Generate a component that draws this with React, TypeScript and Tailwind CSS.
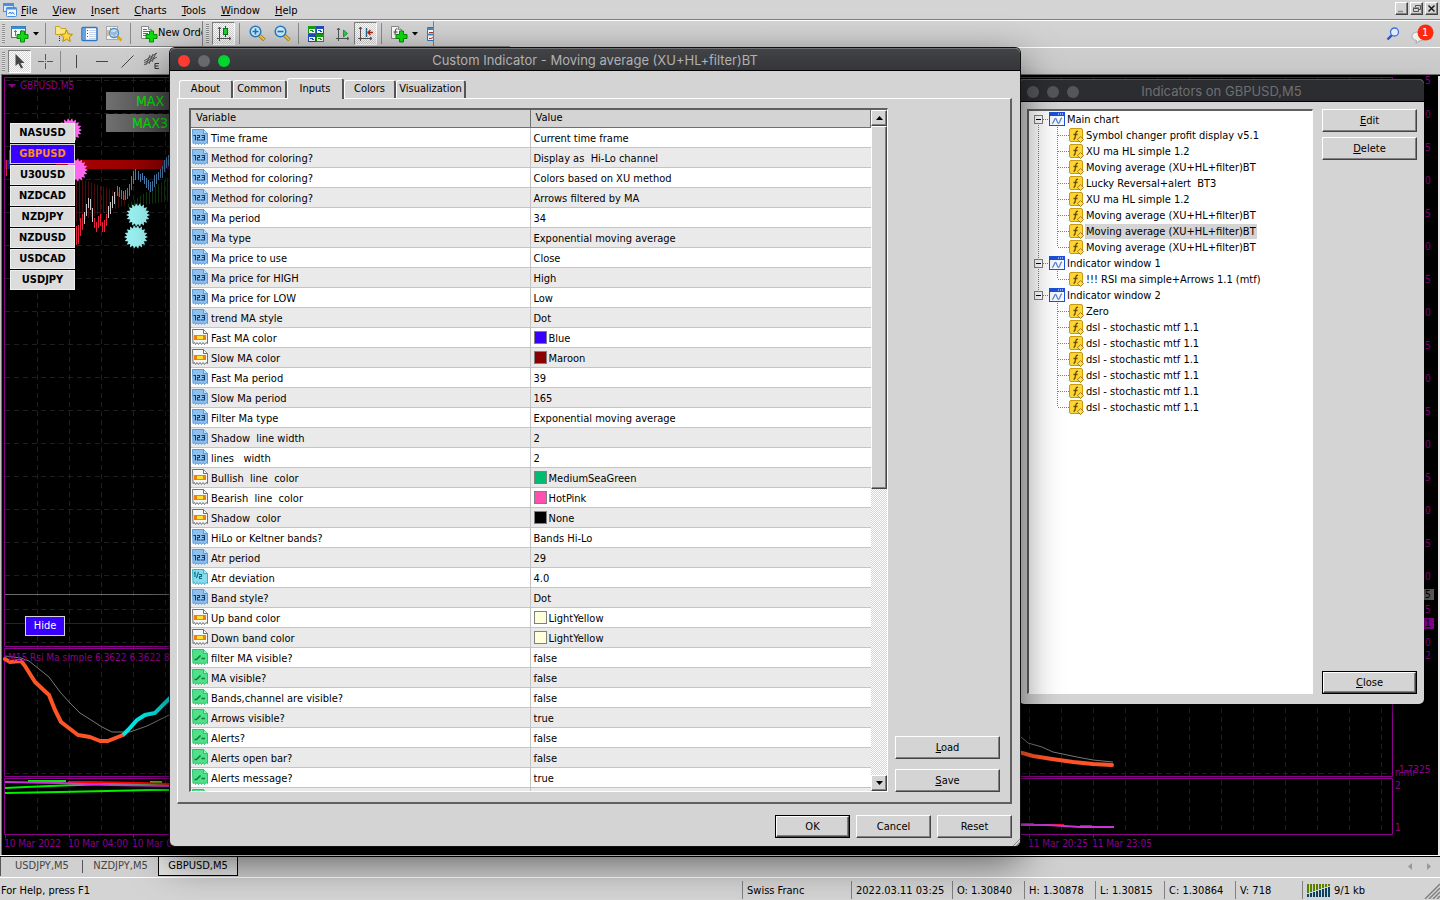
import React from "react";

const TAHOMA = "font-['DejaVu_Sans_Condensed','Liberation_Sans',sans-serif] text-[11px]";
const RAISED =
  "border border-t-white border-l-white border-r-[#444] border-b-[#444] bg-[#d4d4d4] shadow-[inset_-1px_-1px_0_#808080]";
const PRESSED =
  "border border-t-[#808080] border-l-[#808080] border-r-white border-b-white bg-[repeating-conic-gradient(#ffffff_0_25%,#d4d4d4_0_50%)] bg-[length:2px_2px]";
const CHECKER = "bg-[repeating-conic-gradient(#ffffff_0_25%,#d4d4d4_0_50%)] bg-[length:2px_2px]";

/* ---------- icons ---------- */

function AppIcon() {
  return (
    <svg width="16" height="16" viewBox="0 0 16 16" aria-hidden="true">
      <rect x="1.5" y="1.5" width="10" height="8" fill="#dcebfb" stroke="#4a8ee0" />
      <path d="M1.5 3h10" stroke="#4a8ee0" strokeWidth="2" />
      <rect x="4.5" y="5.5" width="10" height="9" rx="1" fill="#f4f9ff" stroke="#4a8ee0" />
      <path d="M4.5 6.5h10" stroke="#4a8ee0" strokeWidth="2" />
      <path d="M6.5 12l1.500-2 1.500 2 1-2 2 2.500" fill="none" stroke="#3a7bd0" />
    </svg>
  );
}

function Plus({ x, y }: { x: number; y: number }) {
  return (
    <path
      transform={`translate(${x} ${y})`}
      d="M4 .5h4V4h3.500v4H8v3.500H4V8H.5V4H4z"
      fill="#0fdc0f"
      stroke="#0a8a0a"
    />
  );
}

function NewChartIcon() {
  return (
    <svg width="18" height="18" viewBox="0 0 18 18" aria-hidden="true">
      <rect x=".5" y="1.500" width="14" height="11" fill="#f3f8fd" stroke="#2f7fc0" />
      <path d="M1 3h13" stroke="#3b8fd0" strokeWidth="2" />
      <path d="M4.500 5v6M3 6.500h3M10.500 5v3" stroke="#5a7fa0" />
      <Plus x={5.5} y={5.5} />
    </svg>
  );
}

function FavoritesIcon() {
  return (
    <svg width="19" height="18" viewBox="0 0 19 18" aria-hidden="true">
      <path d="M1.500 1.500h4l1.500 2h5v6H1.500z" fill="#f9e48a" stroke="#c9a21a" />
      <path d="M5.500 11v5" stroke="#333" strokeDasharray="1 1" />
      <path d="M12.500 5l1.800 4 4.200.4-3.200 2.900 1 4.200-3.800-2.300-3.700 2.300 1-4.200-3.200-2.900 4.200-.4z" fill="#ffd93a" stroke="#b78a10" />
    </svg>
  );
}

function NavigatorIcon() {
  return (
    <svg width="17" height="16" viewBox="0 0 17 16" aria-hidden="true">
      <rect x="1" y="1.500" width="15" height="13" rx="1" fill="#fff" stroke="#2a76c8" strokeWidth="1.500" />
      <rect x="2" y="2" width="3" height="12" fill="#5aa4ea" />
      <path d="M6 4.500h1M6 7.500h1M6 10.500h1" stroke="#d02020" />
      <path d="M8 4.500h7M8 6.500h7M8 8.500h7M8 10.500h7M8 12.500h7" stroke="#c5d6ea" />
    </svg>
  );
}

function TesterIcon() {
  return (
    <svg width="18" height="18" viewBox="0 0 18 18" aria-hidden="true">
      <rect x="1.500" y="1.500" width="11" height="13" fill="#f2f2f2" stroke="#a8a8a8" />
      <path d="M3 11V5M5.500 9V3M10 12V7" stroke="#a09060" />
      <circle cx="9" cy="8" r="4.500" fill="#bfe0fa" fillOpacity=".8" stroke="#4c8cc8" strokeWidth="1.300" />
      <path d="M12.500 11.500l4 4" stroke="#d6a520" strokeWidth="2.600" />
      <path d="M7 10V6.500M9 11V7M11 9.500V6" stroke="#6f93b8" />
    </svg>
  );
}

function DocPlusIcon({ fx }: { fx?: boolean }) {
  return (
    <svg width="18" height="18" viewBox="0 0 18 18" aria-hidden="true">
      <path d="M1.500 1.500h7l3 3v9h-10z" fill="#fbfbfb" stroke="#888" />
      <path d="M8.500 1.500v3h3" fill="#ddd" stroke="#888" />
      {fx ? (
        <path d="M7.500 4C6 3.500 5.500 4 5.300 6L5 10M3.500 7h4" fill="none" stroke="#444" />
      ) : (
        <path d="M3 4.500h4M3 6.500h6M3 8.500h5M3 10.500h3" stroke="#667" />
      )}
      <Plus x={5.5} y={5.5} />
    </svg>
  );
}

function CandleIcon() {
  return (
    <svg width="16" height="16" viewBox="0 0 16 16" aria-hidden="true">
      <path d="M3.500 1v14M1 12.500h14M2 3l1.500-2L5 3M13 11l2 1.500-2 1.500" fill="none" stroke="#555" />
      <path d="M9.500 0v11" stroke="#0a7a0a" />
      <rect x="7.500" y="2.500" width="4" height="6" fill="#12d83a" stroke="#0a7a0a" />
    </svg>
  );
}

function ZoomIcon({ plus }: { plus?: boolean }) {
  return (
    <svg width="17" height="17" viewBox="0 0 17 17" aria-hidden="true">
      <path d="M10.500 10.500l5 4.500" stroke="#a87c10" strokeWidth="3.600" />
      <path d="M10.500 10.500l4.800 4.300" stroke="#f3cf3c" strokeWidth="2" />
      <circle cx="6.500" cy="6.500" r="5.300" fill="#c9ecfd" stroke="#2a7cc4" strokeWidth="1.500" />
      <path d={plus ? "M3.500 6.500h6M6.500 3.500v6" : "M3.500 6.500h6"} stroke="#2a6fb0" strokeWidth="1.600" />
    </svg>
  );
}

function TileIcon() {
  const tile = (x: number, y: number, c: string, l: string) => (
    <g key={`${x}-${y}`}>
      <rect x={x} y={y} width="8" height="8" fill={c} />
      <rect x={x + 1} y={y + 3} width="6" height="4" fill="#fff" />
      <path d={`M${x + 2} ${y + 4.5}h3M${x + 4} ${y + 5.5}h2`} stroke={l} />
    </g>
  );
  return (
    <svg width="16" height="16" viewBox="0 0 16 16" aria-hidden="true">
      {tile(0, 0, "#14a012", "#14a012")}
      {tile(8, 0, "#1d4fc0", "#1d4fc0")}
      {tile(0, 8, "#1d4fc0", "#1d4fc0")}
      {tile(8, 8, "#14a012", "#14a012")}
    </svg>
  );
}

function AutoScrollIcon() {
  return (
    <svg width="16" height="16" viewBox="0 0 16 16" aria-hidden="true">
      <path d="M3.500 2v13M1 12.500h13M2 4l1.500-2L5 4M12 11l2 1.500-2 1.500" fill="none" stroke="#555" />
      <path d="M8.500 4v7l4-3.500z" fill="#2ad04a" stroke="#0a8a2a" strokeWidth=".8" />
    </svg>
  );
}

function ChartShiftIcon() {
  return (
    <svg width="17" height="16" viewBox="0 0 17 16" aria-hidden="true">
      <path d="M3.500 1v14M1 12.500h14M2 3l1.500-2L5 3M13 11l2 1.500-2 1.500" fill="none" stroke="#555" />
      <path d="M9.500 2v9" stroke="#1d6a90" strokeWidth="1.400" />
      <path d="M11 6.500h5M13.500 4L11 6.500 13.500 9" fill="none" stroke="#b02010" strokeWidth="1.300" />
    </svg>
  );
}

function PeriodIcon() {
  return (
    <svg width="7" height="16" viewBox="0 0 7 16" aria-hidden="true">
      <path d="M7 1.500H1.500v13H7" fill="#fff" stroke="#2a76c8" />
      <path d="M1 3h6M1 8.500h6" stroke="#3b8fd0" strokeWidth="2" />
      <path d="M3 6.500h4M3 12.500h2l2-1" stroke="#c03020" fill="none" />
    </svg>
  );
}

function Caret() {
  return (
    <svg width="6" height="4" viewBox="0 0 6 4" aria-hidden="true">
      <path d="M0 0h6L3 3.500z" fill="#000" />
    </svg>
  );
}

type Kind = "int" | "dbl" | "color" | "bool";
const SHEET = "M.5.5h11l4 4v10l-1.500-1-1.500 2-1.500-2-1.500 2-1.500-2-1.500 2-1.500-2-1.500 2-1-2-1.500 1z";

function KindIcon({ kind }: { kind: Kind }) {
  const fill = { int: "#8fc0ee", dbl: "#86dcec", color: "#f6f6f6", bool: "#4fe08a" }[kind];
  const stroke = { int: "#5a9ad8", dbl: "#3fb2ca", color: "#707070", bool: "#2cc068" }[kind];
  return (
    <svg width="16" height="16" viewBox="0 0 16 16" aria-hidden="true" className="shrink-0">
      <path d={SHEET} fill={fill} stroke={stroke} />
      <path d="M11.500.5v4h4" fill="#fff" fillOpacity=".5" stroke={stroke} />
      {kind === "int" && (
        <path
          d="M1.500 6.500H3.500V11.500M5 6.500h2.500v2H5.500v2.500H8.500M9.500 6.500h3v4.500h-3.500M10 8.500h2.500"
          fill="none"
          stroke="#0d3a70"
          strokeWidth="1.100"
        />
      )}
      {kind === "dbl" && (
        <path d="M2 4.500l1-1V8M6.500 3L4.500 9M7 5.500h2.500v2H7.500v2H10" fill="none" stroke="#0d6a80" strokeWidth="1.100" />
      )}
      {kind === "color" && (
        <>
          <rect x="2" y="6" width="12" height="5" fill="#f08010" />
          <rect x="5" y="7" width="6" height="3" fill="#ffe030" />
        </>
      )}
      {kind === "bool" && <path d="M2.500 10.500h2l4-4M9.500 9.500h3.500" fill="none" stroke="#0a7a3a" strokeWidth="1.600" />}
    </svg>
  );
}

function WindowIcon() {
  return (
    <svg width="16" height="14" viewBox="0 0 16 14" aria-hidden="true">
      <rect x=".5" y=".5" width="15" height="13" fill="#f6f9ff" stroke="#1c50d8" />
      <rect width="16" height="4" fill="#1c50d8" />
      <path d="M9 2h1M11 2h1M13 2h1" stroke="#fff" />
      <path d="M3 11.500c2 0 2-5 3.500-5s1.500 5 3 5S11 6 13 6" fill="none" stroke="#5a86d8" strokeWidth="1.300" />
    </svg>
  );
}

function FunctionIcon() {
  return (
    <svg width="15" height="15" viewBox="0 0 15 15" aria-hidden="true">
      <rect x=".5" y=".5" width="13" height="13" rx="1.500" fill="#fbd634" stroke="#c79a10" />
      <path d="M9 3.500C7.500 2.700 7 4 6.700 6L6 10c-.2 1-.8 1.300-1.600 1M4.500 6.500h4" fill="none" stroke="#6a4a00" strokeWidth="1.300" />
      <path d="M11.500 8.500l3 3-3 3-3-3z" fill="#ffdf50" stroke="#a87c10" />
    </svg>
  );
}

/* ---------- menu and toolbars ---------- */

const MENUS = ["File", "View", "Insert", "Charts", "Tools", "Window", "Help"];

function Accel({ text }: { text: string }) {
  return (
    <>
      <span className="underline underline-offset-1">{text[0]}</span>
      {text.slice(1)}
    </>
  );
}

function MenuBar() {
  const box = `flex h-[13px] w-[13px] items-center justify-center ${RAISED}`;
  return (
    <header className="flex h-5 items-center border-b border-[#808080] px-[2px]">
      <AppIcon />
      <nav className="ml-[3px] flex flex-1 gap-[15px] pt-1">
        {MENUS.map((m) => (
          <button key={m} type="button">
            <Accel text={m} />
          </button>
        ))}
      </nav>
      <div className="flex gap-[2px] pb-[3px]">
        <button type="button" aria-label="Minimize" className={box}>
          <svg width="9" height="9"><path d="M1 7.500h5" stroke="#888" strokeWidth="1.500" /></svg>
        </button>
        <button type="button" aria-label="Restore" className={box}>
          <svg width="9" height="9"><path d="M3.500 3V1.500h5v4H7M1.500 4.500h5v3h-5zM1 4h6" fill="none" stroke="#555" /></svg>
        </button>
        <button type="button" aria-label="Close window" className={box}>
          <svg width="9" height="9"><path d="M1.500 1.500l6 6M7.500 1.500l-6 6" stroke="#111" strokeWidth="1.400" /></svg>
        </button>
      </div>
    </header>
  );
}

function Grip() {
  return <span className="h-[19px] w-[3px] shrink-0 bg-[repeating-linear-gradient(#8a8a8a_0_1px,#e4e4e4_1px_2px)]" />;
}

function Sep() {
  return <span className="h-[21px] w-px shrink-0 bg-[#8a8a8a]" />;
}

function Tool({ label, w, on, children }: { label: string; w: string; on?: boolean; children: React.ReactNode }) {
  return (
    <button type="button" aria-label={label} className={`flex h-[23px] shrink-0 items-center justify-center gap-1 ${w} ${on ? PRESSED : ""}`}>
      {children}
    </button>
  );
}

function Toolbars() {
  return (
    <div className="relative border-t border-white bg-linear-to-b from-[#d4d4d4] to-[#c8c8c8]">
      <div className="flex h-[26px] items-center">
        <div className="flex h-full w-[203px] items-center overflow-hidden border-b border-r border-[#808080] pl-[2px]">
          <Grip />
          <Tool label="New chart" w="w-[40px]"><NewChartIcon /><Caret /></Tool>
          <Sep />
          <Tool label="Favorites" w="w-[34px]"><FavoritesIcon /></Tool>
          <Tool label="Navigator" w="w-[18px]"><NavigatorIcon /></Tool>
          <Tool label="Strategy tester" w="w-[32px]"><TesterIcon /></Tool>
          <Sep />
          <button type="button" className="flex shrink-0 items-center whitespace-nowrap pl-[9px]">
            <DocPlusIcon />
            New Order
          </button>
        </div>
        <div className="flex h-full w-[231px] items-center overflow-hidden border-b border-r border-[#808080] pl-[3px]">
          <Grip />
          <span className="w-[3px] shrink-0" />
          <Tool label="Candlesticks" w="w-[23px]" on><CandleIcon /></Tool>
          <span className="w-1 shrink-0" />
          <Sep />
          <span className="w-1 shrink-0" />
          <Tool label="Zoom in" w="w-[26px]"><ZoomIcon plus /></Tool>
          <Tool label="Zoom out" w="w-[25px]"><ZoomIcon /></Tool>
          <span className="w-[3px] shrink-0" />
          <Sep />
          <Tool label="Tile windows" w="w-[33px]"><TileIcon /></Tool>
          <Tool label="Auto scroll" w="w-[22px]"><AutoScrollIcon /></Tool>
          <Tool label="Chart shift" w="w-[23px]" on><ChartShiftIcon /></Tool>
          <span className="w-1 shrink-0" />
          <Sep />
          <Tool label="Indicators" w="w-[44px]"><DocPlusIcon fx /><Caret /></Tool>
          <Tool label="Periods" w="w-[7px]"><PeriodIcon /></Tool>
        </div>
        <div className="flex h-full w-[76px] border-b border-[#808080]" />
        <div className="flex flex-1 items-center justify-end gap-[11px] pr-[6px]">
          <button type="button" aria-label="Search">
            <svg width="14" height="14" viewBox="0 0 14 14">
              <path d="M1.500 12.500L6 8" stroke="#2a52c8" strokeWidth="2.400" />
              <circle cx="8.500" cy="5" r="4" fill="#e2edff" stroke="#3f6fe0" strokeWidth="1.300" />
            </svg>
          </button>
          <button type="button" aria-label="Notifications" className="relative h-5 w-[23px]">
            <svg width="23" height="20" viewBox="0 0 23 20">
              <path d="M7 8c4 0 7 1.500 7 4.500S11 17 8 17l-3 2.500.5-3C2.500 16 1 14.500 1 12.500 1 9.500 3.500 8 7 8z" fill="#efefef" stroke="#a8a8a8" />
              <circle cx="14.500" cy="8.500" r="8" fill="#fb2a0e" />
            </svg>
            <span className="absolute left-[11px] top-[1px] text-white">1</span>
          </button>
        </div>
      </div>
      <div className="flex h-[27px] items-center border-t border-white pl-[2px]">
        <Grip />
        <span className="w-[3px] shrink-0" />
        <Tool label="Cursor" w="w-[23px]" on>
          <svg width="12" height="15" viewBox="0 0 12 15"><path d="M1.500 0v12l3-2.500 2.500 5 2-1-2.500-4.500h4z" fill="#444" /></svg>
        </Tool>
        <Tool label="Crosshair" w="w-[29px]">
          <svg width="15" height="15"><path d="M7.500 0v6M7.500 9v6M0 7.500h6M9 7.500h6M7 7.500h1" stroke="#555" /></svg>
        </Tool>
        <Sep />
        <Tool label="Vertical line" w="w-[31px]"><svg width="3" height="13"><path d="M1.500 0v13" stroke="#444" /></svg></Tool>
        <Tool label="Horizontal line" w="w-[20px]"><svg width="12" height="3"><path d="M0 1.500h12" stroke="#444" /></svg></Tool>
        <Tool label="Trend line" w="w-[30px]"><svg width="13" height="13"><path d="M.5 12.500l12-12" stroke="#444" /></svg></Tool>
        <Tool label="Equidistant channel" w="w-[20px]">
          <svg width="18" height="18" viewBox="0 0 18 18">
            <path d="M1 9L14 1M1 13L14 5M3 13L7 3M6 12l4-10M9 10l4-9M1 11l10-6" stroke="#555" />
            <path d="M16 11.500h-4v5h4M12 14h3.500" fill="none" stroke="#333" />
          </svg>
        </Tool>
      </div>
    </div>
  );
}

/* ---------- chart ---------- */

const GRID_X = Array.from({ length: 43 }, (_, i) => 37.5 + i * 32);
const GRID_Y = [80.5, 113.5, 146.5, 179.5, 212.5, 245.5, 278.5, 311.5, 344.5, 377.5, 410.5, 443.5, 476.5, 509.5, 542.5, 575.5, 609.5, 642.5, 773.5];
const AXIS: [number, string][] = [
  [84, "5"], [118, "0"], [151, "5"], [184, "0"], [217, "5"], [250, "0"], [283, "5"], [316, "0"], [349, "5"],
  [382, "0"], [415, "5"], [448, "0"], [481, "5"], [514, "0"], [547, "5"], [580, "0"], [613, "5"], [646, "0"], [659, "2"],
];
const PRICE: [number, number, number, string][] = [
  [76, 226, 245, "r"], [78, 225, 244, "r"], [80, 218, 236, "r"], [82, 214, 230, "r"], [84, 212, 224, "w"], [86, 204, 216, "w"],
  [88, 198, 208, "w"], [90, 199, 210, "w"], [92, 208, 222, "w"], [94, 218, 228, "r"], [96, 222, 232, "r"], [98, 216, 228, "r"],
  [100, 214, 226, "r"], [102, 222, 232, "r"], [104, 220, 232, "r"], [106, 214, 226, "r"], [108, 206, 218, "w"], [110, 202, 214, "w"],
  [112, 196, 208, "w"], [114, 192, 204, "w"], [117, 186, 196, "b"], [119, 187, 197, "b"], [121, 190, 199, "b"], [123, 191, 200, "b"],
  [125, 190, 200, "b"], [127, 188, 199, "b"], [129, 184, 196, "b"], [131, 176, 190, "b"], [133, 171, 184, "b"], [135, 169, 180, "b"],
  [138, 171, 180, "b"], [140, 174, 182, "b"], [142, 173, 180, "b"], [144, 176, 184, "b"], [146, 178, 188, "b"], [148, 180, 190, "b"],
  [150, 182, 192, "b"], [152, 181, 191, "b"], [154, 175, 187, "b"], [156, 174, 184, "b"], [158, 172, 180, "b"], [160, 169, 178, "b"],
  [162, 166, 178, "b"], [164, 160, 172, "b"], [166, 157, 168, "b"], [168, 155, 166, "b"], [170, 154, 164, "b"],
];
const PRICE_COLORS: Record<string, string> = { r: "#e8203c", w: "#c8c8c8", b: "#4a80b0" };

function burst(cx: number, cy: number, r: number) {
  const pts: string[] = [];
  for (let i = 0; i < 36; i++) {
    const a = (i * Math.PI) / 18;
    const q = i % 2 ? r - 3 : r;
    pts.push(`${(cx + q * Math.cos(a)).toFixed(1)},${(cy + q * Math.sin(a)).toFixed(1)}`);
  }
  return pts.join(" ");
}

function Chart() {
  return (
    <svg viewBox="0 74 1440 781" preserveAspectRatio="xMinYMin slice" className="absolute inset-0 h-full w-full" role="img" aria-label="GBPUSD,M5 chart">
      <defs>
        <linearGradient id="tag" x2="1"><stop offset="0" stopColor="#707070" /><stop offset="1" stopColor="#484848" /></linearGradient>
        <linearGradient id="band" x2="1"><stop offset="0" stopColor="#b00000" /><stop offset=".9" stopColor="#900000" /><stop offset="1" stopColor="#101060" /></linearGradient>
      </defs>
      <rect y="74" width="1440" height="781" fill="#000" />
      <path d="M0 74.500h1440M1.500 74v781" stroke="#707070" fill="none" />
      <path d="M.5 74v781" stroke="#c4c4c4" />
      <path d="M1439 76v779" stroke="#e8e8e8" strokeWidth="2" />
      <g stroke="#1f1f1f" strokeDasharray="5 4" fill="none">
        {GRID_X.map((x) => <path key={x} d={`M${x} 78V834`} />)}
        {GRID_Y.map((y) => <path key={y} d={`M5 ${y}H1392`} />)}
      </g>
      <path d="M5 594.500H1426" stroke="#6c6c6c" />
      <path d="M5 623.500H1392" stroke="#242424" />
      {Array.from({ length: 17 }, (_, i) => (
        <path key={i} d={`M${76.5 + i * 3} ${177 + i * 1.1}V${222 - i}`} stroke="#4a0c0c" />
      ))}
      {Array.from({ length: 15 }, (_, i) => (
        <path key={i} d={`M${128.5 + i * 3} ${204 - i * 2}V${207 - i * 0.4}`} stroke="#0c3a0c" />
      ))}
      <rect x="5" y="160" width="6" height="9" fill="#102090" />
      <path d="M6.500 160v16M9.500 150v14" stroke="#d02040" />
      <rect x="56" y="160" width="116" height="9" fill="url(#band)" />
      <g shapeRendering="crispEdges">
        {PRICE.map(([x, a, b, c]) => <path key={x} d={`M${x + 0.5} ${a}V${b}`} stroke={PRICE_COLORS[c]} />)}
      </g>
      <polygon points={burst(70, 130, 12)} fill="#ff66ee" />
      <polygon points={burst(76, 170, 12)} fill="#ff66ee" />
      <polygon points={burst(138, 215, 12)} fill="#9af0f0" />
      <polygon points={burst(136, 237, 12)} fill="#9af0f0" />
      <rect x="106" y="92" width="66" height="18" fill="url(#tag)" />
      <rect x="106" y="114" width="66" height="18" fill="url(#tag)" />
      <g fill="#00e000" className="font-['DejaVu_Sans_Condensed',sans-serif] text-[14px]">
        <text x="136" y="106">MAX</text>
        <text x="132" y="128">MAX3</text>
      </g>
      <g stroke="#8c008c" fill="none">
        <path d="M4.500 646.500V77.500H1392.500V646.500zM4.500 648.500H1392.500V776.500H4.500zM4.500 778.500H1392.500V834.500H4.500zM5.500 834v4M69.500 834v4M133.500 834v4M1029.500 834v4M1093.500 834v4" />
      </g>
      <path d="M5 656L21 658 29 661 49 677 60 692 70 703 80 713 102 727 112 732 130 732 147 726 171 714M1021 737L1028 743 1042 747 1053 752 1077 757 1093 760 1113 762" fill="none" stroke="#787878" />
      <path d="M5 659L10 662 21 661 25 666 35 682 49 695 55 710 61 722 78 735 90 737 100 741 108 741 123 735M1015 751L1033 756 1052 759 1073 762 1093 764 1112 765" fill="none" stroke="#ff5526" strokeWidth="4" strokeLinecap="round" strokeLinejoin="round" />
      <path d="M123 735L128 730 137 720 145 715 155 713 171 697" fill="none" stroke="#00e6e6" strokeWidth="4" />
      <g fill="none" strokeWidth="2">
        <path d="M5 788L26 787 50 786 106 784H171M5 793L60 792 107 791 150 790 171 790" stroke="#00f000" />
        <path d="M28 781H66M150 782H162" stroke="#00f000" />
        <path d="M68 782H92L140 783 171 784M1021 824H1034M1048 825H1064M1080 826H1092" stroke="#ff0000" />
        <path d="M5 782L60 783 110 785 171 786M1021 825L1048 825 1080 827 1114 827" stroke="#cc33dd" />
      </g>
      <path d="M8 84h8l-4 4z" fill="#8c008c" />
      <g fill="#8c008c" className="font-['DejaVu_Sans_Condensed',sans-serif] text-[10px]">
        <text x="20" y="89">GBPUSD,M5</text>
        <text x="8" y="661">M15 Rsi Ma simple 6.3622 6.3622 8.2655</text>
        <text x="4" y="847">10 Mar 2022</text>
        <text x="68" y="847">10 Mar 04:00</text>
        <text x="132" y="847">10 Mar 06:40</text>
        <text x="1028" y="847">11 Mar 20:25</text>
        <text x="1092" y="847">11 Mar 23:05</text>
        <text x="1395" y="776">n.mr</text>
        <text x="1399" y="773">1.7325</text>
        <text x="1395" y="789">2</text>
        <text x="1395" y="831">1</text>
        {AXIS.map(([y, t]) => <text key={y} x="1425" y={y}>{t}</text>)}
      </g>
      <rect x="1400" y="589" width="34" height="11" fill="#5c5c5c" />
      <rect x="1400" y="618" width="34" height="11" fill="#8c008c" />
      <g fill="#000" className="font-['DejaVu_Sans_Condensed',sans-serif] text-[10px]">
        <text x="1425" y="598">5</text>
        <text x="1425" y="627">1</text>
      </g>
    </svg>
  );
}

const SYMBOLS = ["NASUSD", "GBPUSD", "U30USD", "NZDCAD", "NZDJPY", "NZDUSD", "USDCAD", "USDJPY"];

function SymbolPanel() {
  return (
    <div className="absolute left-[10px] top-[49px] flex w-[65px] flex-col gap-px">
      {SYMBOLS.map((s) => (
        <button
          key={s}
          type="button"
          className={
            s === "GBPUSD"
              ? "h-5 border border-[#d4d4d4] bg-[#3700ff] font-bold text-[#ff8c1a]"
              : "h-5 border border-[#f0f0f0] bg-[#dcdcdc] font-bold text-black"
          }
        >
          {s}
        </button>
      ))}
    </div>
  );
}

/* ---------- dialogs ---------- */

function TitleBar({ title, active }: { title: string; active?: boolean }) {
  return (
    <div
      className={`relative flex h-[23px] shrink-0 items-center justify-center rounded-t-[5px] border-b border-t border-b-black pt-[2px] font-['Inter',sans-serif] text-[13px] ${
        active ? "border-t-[#707070] bg-linear-to-b from-[#424346] to-[#353639] text-[#b0b1b3]" : "border-t-[#55565a] bg-[#2b2d31] text-[#6e6f72]"
      }`}
    >
      <div className="absolute left-2 flex gap-2">
        <span className={`h-3 w-3 rounded-full ${active ? "bg-[#ff3b30]" : "bg-[#55565a]"}`} />
        <span className={`h-3 w-3 rounded-full ${active ? "bg-[#68696c]" : "bg-[#55565a]"}`} />
        <span className={`h-3 w-3 rounded-full ${active ? "bg-[#00d62e]" : "bg-[#55565a]"}`} />
      </div>
      <h2>{title}</h2>
    </div>
  );
}

function PushButton({ text, accel, focus, w }: { text: string; accel?: boolean; focus?: boolean; w: string }) {
  return (
    <button type="button" className={`${w} h-[23px] ${focus ? "border border-black" : ""}`}>
      <span className={`flex h-full items-center justify-center pt-[2px] ${RAISED}`}>
        <span>{accel ? <Accel text={text} /> : text}</span>
      </span>
    </button>
  );
}

type Row = [Kind, string, string, string?];
const ROWS: Row[] = [
  ["int", "Time frame", "Current time frame"],
  ["int", "Method for coloring?", "Display as  Hi-Lo channel"],
  ["int", "Method for coloring?", "Colors based on XU method"],
  ["int", "Method for coloring?", "Arrows filtered by MA"],
  ["int", "Ma period", "34"],
  ["int", "Ma type", "Exponential moving average"],
  ["int", "Ma price to use", "Close"],
  ["int", "Ma price for HIGH", "High"],
  ["int", "Ma price for LOW", "Low"],
  ["int", "trend MA style", "Dot"],
  ["color", "Fast MA color", "Blue", "#3700ff"],
  ["color", "Slow MA color", "Maroon", "#8b0000"],
  ["int", "Fast Ma period", "39"],
  ["int", "Slow Ma period", "165"],
  ["int", "Filter Ma type", "Exponential moving average"],
  ["int", "Shadow  line width", "2"],
  ["int", "lines   width", "2"],
  ["color", "Bullish  line  color", "MediumSeaGreen", "#00bc70"],
  ["color", "Bearish  line  color", "HotPink", "#ff50b0"],
  ["color", "Shadow  color", "None", "#000000"],
  ["int", "HiLo or Keltner bands?", "Bands Hi-Lo"],
  ["int", "Atr period", "29"],
  ["dbl", "Atr deviation", "4.0"],
  ["int", "Band style?", "Dot"],
  ["color", "Up band color", "LightYellow", "#ffffdc"],
  ["color", "Down band color", "LightYellow", "#ffffdc"],
  ["bool", "filter MA visible?", "false"],
  ["bool", "MA visible?", "false"],
  ["bool", "Bands,channel are visible?", "false"],
  ["bool", "Arrows visible?", "true"],
  ["bool", "Alerts?", "false"],
  ["bool", "Alerts open bar?", "false"],
  ["bool", "Alerts message?", "true"],
  ["bool", "", ""],
];

function InputsTable() {
  return (
    <div className="flex min-h-0 min-w-0 flex-1 border-2 border-b border-r border-b-white border-l-[#606060] border-r-white border-t-[#606060] bg-white">
      <div className="min-w-0 flex-1 overflow-hidden">
        <table className="w-full table-fixed border-collapse whitespace-pre">
          <thead>
            <tr className="h-[17px] bg-[#d4d4d4]">
              <th className="w-[339px] border-b border-r border-[#707070] p-0 pl-[5px] text-left font-normal leading-4">Variable</th>
              <th className="border-b border-r border-[#707070] p-0 pl-[5px] text-left font-normal leading-4">Value</th>
            </tr>
          </thead>
          <tbody>
            {ROWS.map(([kind, name, value, color], i) => (
              <tr key={i} className="h-5 border-b border-[#c4c4c4] odd:bg-white even:bg-[#eaeaea]">
                <td className="border-r border-[#c4c4c4] p-0">
                  <div className="flex h-[19px] items-center gap-[3px] pl-px">
                    <KindIcon kind={kind} />
                    <span className="pt-[3px] leading-4">{name}</span>
                  </div>
                </td>
                <td className="p-0">
                  <div className="flex h-[19px] items-center gap-[2px] pl-[3px]">
                    {color && <span className="h-[13px] w-[13px] border border-[#808080]" style={{ backgroundColor: color }} />}
                    <span className="pt-[3px] leading-4">{value}</span>
                  </div>
                </td>
              </tr>
            ))}
          </tbody>
        </table>
      </div>
      <div className={`flex w-4 shrink-0 flex-col ${CHECKER}`}>
        <button type="button" aria-label="Scroll up" className={`flex h-4 items-center justify-center ${RAISED}`}>
          <svg width="7" height="4"><path d="M0 4h7L3.500 0z" fill="#000" /></svg>
        </button>
        <div className={`h-[363px] ${RAISED}`} />
        <div className="flex-1" />
        <button type="button" aria-label="Scroll down" className={`flex h-4 items-center justify-center ${RAISED}`}>
          <svg width="7" height="4"><path d="M0 0h7L3.500 4z" fill="#000" /></svg>
        </button>
      </div>
    </div>
  );
}

const TABS: [string, string][] = [
  ["About", "w-[54px]"],
  ["Common", "w-[54px]"],
  ["Inputs", "w-[57px]"],
  ["Colors", "w-[52px]"],
  ["Visualization", "w-[70px]"],
];

function IndicatorDialog() {
  return (
    <section
      aria-label="Custom Indicator"
      className="absolute left-[170px] top-12 flex h-[798px] w-[850px] flex-col rounded-[5px] bg-[#d4d4d4] shadow-[0_0_0_1px_#111,0_14px_40px_rgba(0,0,0,0.6)]"
    >
      <TitleBar title="Custom Indicator - Moving average (XU+HL+filter)BT" active />
      <div className="flex min-h-0 flex-1 flex-col pb-2 pl-[7px] pr-2 pt-[7px]">
        <div role="tablist" className="flex h-5 shrink-0 items-end pl-[2px]">
          {TABS.map(([t, w]) => (
            <button
              key={t}
              type="button"
              role="tab"
              aria-selected={t === "Inputs"}
              className={`${w} rounded-t-[3px] border-l border-r-2 border-t border-l-white border-r-[#555] border-t-white ${
                t === "Inputs" ? "relative -mb-px h-[21px] bg-[#d4d4d4]" : "h-[18px]"
              }`}
            >
              {t}
            </button>
          ))}
        </div>
        <div className="flex min-h-0 flex-1 gap-[7px] border border-r-2 border-b-2 border-b-[#606060] border-l-white border-r-[#606060] border-t-white pb-[10px] pl-[11px] pr-[10px] pt-[9px]">
          <InputsTable />
          <div className="flex flex-col justify-end gap-[10px]">
            <PushButton text="Load" accel w="w-[105px]" />
            <PushButton text="Save" accel w="w-[105px]" />
          </div>
        </div>
        <div className="flex shrink-0 justify-end gap-[6px] pt-[11px]">
          <PushButton text="OK" focus w="w-[75px]" />
          <PushButton text="Cancel" w="w-[75px]" />
          <PushButton text="Reset" w="w-[75px]" />
        </div>
      </div>
      <svg width="7" height="7" className="absolute bottom-0 right-0" aria-hidden="true">
        <path d="M0 7L7 0M3 7l4-4" stroke="#888" />
      </svg>
    </section>
  );
}

type TreeItem = { label: string; root?: boolean; first?: boolean; last?: boolean; selected?: boolean; trunk?: boolean };
const TREE: TreeItem[] = [
  { label: "Main chart", root: true, first: true },
  { label: "Symbol changer profit display v5.1", trunk: true },
  { label: "XU ma HL simple 1.2", trunk: true },
  { label: "Moving average (XU+HL+filter)BT", trunk: true },
  { label: "Lucky Reversal+alert  BT3", trunk: true },
  { label: "XU ma HL simple 1.2", trunk: true },
  { label: "Moving average (XU+HL+filter)BT", trunk: true },
  { label: "Moving average (XU+HL+filter)BT", trunk: true, selected: true },
  { label: "Moving average (XU+HL+filter)BT", trunk: true, last: true },
  { label: "Indicator window 1", root: true },
  { label: "!!! RSI ma simple+Arrows 1.1 (mtf)", trunk: true, last: true },
  { label: "Indicator window 2", root: true, last: true },
  { label: "Zero" },
  { label: "dsl - stochastic mtf 1.1" },
  { label: "dsl - stochastic mtf 1.1" },
  { label: "dsl - stochastic mtf 1.1" },
  { label: "dsl - stochastic mtf 1.1" },
  { label: "dsl - stochastic mtf 1.1" },
  { label: "dsl - stochastic mtf 1.1", last: true },
];

function TreeRow({ item }: { item: TreeItem }) {
  const { root, first, last, trunk, selected, label } = item;
  return (
    <li className="flex h-4 items-center whitespace-pre">
      {root ? (
        <svg width="20" height="16" aria-hidden="true">
          <path d={`M9.500 ${first ? 12 : 0}V${last ? 4 : 16}M14 8.500H20`} stroke="#808080" strokeDasharray="1 1" />
          <rect x="5.500" y="4.500" width="8" height="8" fill="#fff" stroke="#808080" />
          <path d="M7 8.500h5" stroke="#000" />
        </svg>
      ) : (
        <svg width="40" height="16" aria-hidden="true">
          <path d={`${trunk ? "M9.500 0V16" : ""}M28.500 0V${last ? 8 : 16}M29 8.500H40`} stroke="#808080" strokeDasharray="1 1" />
        </svg>
      )}
      {root ? <WindowIcon /> : <FunctionIcon />}
      <span className={`ml-px px-px leading-[15px] ${selected ? "bg-[#d4d4d4]" : ""}`}>{label}</span>
    </li>
  );
}

function IndicatorsList() {
  return (
    <section
      aria-label="Indicators"
      className="absolute left-[1019px] top-[79px] flex h-[625px] w-[405px] flex-col rounded-[5px] bg-[#d4d4d4] shadow-[0_4px_14px_rgba(0,0,0,0.5)]"
    >
      <TitleBar title="Indicators on GBPUSD,M5" />
      <div className="flex flex-1 gap-[9px] pb-[10px] pl-2 pr-[7px] pt-[7px]">
        <ul className="flex-1 border-2 border-b border-r border-b-white border-l-[#606060] border-r-white border-t-[#606060] bg-white">
          {TREE.map((item, i) => (
            <TreeRow key={i} item={item} />
          ))}
        </ul>
        <div className="flex flex-col gap-[5px]">
          <PushButton text="Edit" accel w="w-[95px]" />
          <PushButton text="Delete" accel w="w-[95px]" />
          <div className="flex-1" />
          <PushButton text="Close" accel focus w="w-[95px]" />
        </div>
      </div>
    </section>
  );
}

/* ---------- bottom bars ---------- */

function ChartTabs() {
  return (
    <div className="flex h-[22px] items-start border-t border-white bg-[#d0d0d0]">
      <div className="flex h-full flex-1 items-start border-t border-black text-[#444]">
        <span className="h-[19px] w-px bg-[#555]" />
        <button type="button" className="h-[19px] w-[81px] pl-px">USDJPY,M5</button>
        <span className="mt-[3px] h-[13px] w-px bg-[#555]" />
        <button type="button" className="h-[19px] w-[75px]">NZDJPY,M5</button>
        <button type="button" className="h-[19px] w-[80px] border border-t-0 border-black bg-[#e6e6e6] text-black">GBPUSD,M5</button>
        <div className="flex flex-1 justify-end gap-[15px] pr-[9px] pt-[6px]">
          <svg width="4" height="7"><path d="M4 0v7L0 3.500z" fill="#999" /></svg>
          <svg width="4" height="7"><path d="M0 0v7l4-3.500z" fill="#999" /></svg>
        </div>
      </div>
    </div>
  );
}

const STATUS: [string, string][] = [
  ["Swiss Franc", "w-[109px]"],
  ["2022.03.11 03:25", "w-[101px]"],
  ["O: 1.30840", "w-[72px]"],
  ["H: 1.30878", "w-[71px]"],
  ["L: 1.30815", "w-[69px]"],
  ["C: 1.30864", "w-[71px]"],
  ["V: 718", "w-[67px]"],
];

function StatusBar() {
  return (
    <footer className="flex h-[23px] items-center border-t border-white bg-[#d4d4d4] pt-[2px]">
      <span className="flex-1 pl-px pt-[2px]">For Help, press F1</span>
      {STATUS.map(([t, w]) => (
        <span key={t} className={`${w} flex h-[18px] items-center whitespace-nowrap border-l border-[#808080] pl-1 pt-[2px]`}>{t}</span>
      ))}
      <span className="flex h-[18px] w-[138px] items-center gap-[3px] border-l border-[#808080] pl-1">
        <svg width="24" height="13" aria-hidden="true">
          {Array.from({ length: 8 }, (_, i) => (
            <g key={i}>
              <rect x={i * 3} y="0" width="2" height={9 - i} fill="#5a8000" />
              <rect x={i * 3} y={10 - i} width="2" height={3 + i} fill="#0a3f66" />
            </g>
          ))}
        </svg>
        <span className="pt-[2px]">9/1 kb</span>
        <svg width="16" height="16" className="ml-auto self-end" aria-hidden="true">
          <path d="M1 16L16 1M5 16L16 5M9 16l7-7M13 16l3-3" stroke="#808080" strokeWidth="1.500" />
        </svg>
      </span>
    </footer>
  );
}

export default function App() {
  return (
    <div className={`relative flex h-screen flex-col overflow-hidden bg-[#d4d4d4] text-black ${TAHOMA}`}>
      <MenuBar />
      <Toolbars />
      <main className="relative min-h-0 flex-1 overflow-hidden bg-black">
        <Chart />
        <SymbolPanel />
        <button type="button" className="absolute left-[25px] top-[542px] h-5 w-10 border border-[#d4d4d4] bg-[#3700ff] text-white">
          Hide
        </button>
      </main>
      <ChartTabs />
      <StatusBar />
      <IndicatorsList />
      <IndicatorDialog />
    </div>
  );
}
